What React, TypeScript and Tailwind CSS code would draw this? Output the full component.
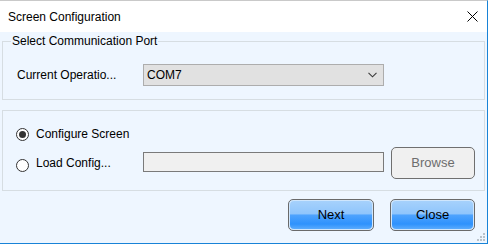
const font = "font-['Liberation_Sans',Arial,sans-serif]"

function Radio({ checked }: { checked?: boolean }) {
  return (
    <span className="w-[13px] h-[13px] rounded-full border border-[#333] bg-white flex items-center justify-center shrink-0">
      {checked && <span className="w-[7px] h-[7px] rounded-full bg-[#333]" />}
    </span>
  )
}

function BlueButton({ label, width }: { label: string; width: string }) {
  return (
    <button
      className={`${width} h-[32px] rounded-[5px] border border-[#6a6a6a] p-[1px] bg-[#cfe6fd]`}
    >
      <span className="flex items-center justify-center w-full h-full rounded-[4px] bg-[linear-gradient(#a6d1fc_0%,#8fc5fc_46%,#4ea3fe_50%,#2e92fd_82%,#5aabfd_100%)] text-[13px] text-black">
        {label}
      </span>
    </button>
  )
}

export default function App() {
  return (
    <div className={`w-[489px] h-[244px] bg-white ${font} text-[12px] text-black`}>
      <div className="relative w-[488px] h-[244px] flex flex-col border-r border-b border-[#1883d7] border-t border-t-[#c9c9c9]">
        {/* Title bar */}
        <div className="h-[31px] bg-white flex items-center justify-between pl-[8px] pr-[9px]">
          <span className="text-[12px] leading-[14px]">Screen Configuration</span>
          <svg width="11" height="11" viewBox="0 0 11 11">
            <path d="M0.5 0.5 L10.5 10.5 M10.5 0.5 L0.5 10.5" stroke="#000" strokeWidth="1" />
          </svg>
        </div>

        {/* Body */}
        <div className="flex-1 bg-[#eef6ff] px-[2px] flex flex-col">
          <fieldset className="mt-[2px] border border-[#d6dde2] pl-[14px] pr-[10px] pb-[13px]">
            <legend className="ml-[-6px] px-[1px] leading-[14px] text-[12px]">Select Communication Port</legend>
            <div className="mt-[16px] flex items-center">
              <span className="w-[126px] leading-[14px]">Current Operatio...</span>
              <div className="w-[241px] h-[22px] bg-[#e1e1e1] border border-[#adadad] flex items-center justify-between pl-[3px] pr-[6px]">
                <span className="leading-[14px]">COM7</span>
                <svg width="9" height="6" viewBox="0 0 9 6">
                  <path d="M0.5 0.8 L4.5 4.8 L8.5 0.8" fill="none" stroke="#3a3a3a" strokeWidth="1.1" />
                </svg>
              </div>
            </div>
          </fieldset>

          <div className="mt-[10px] border border-[#d6dde2] pl-[13px] pr-[9px] pt-[15px] pb-[11px] flex flex-col">
            <div className="flex items-center h-[16px]">
              <Radio checked />
              <span className="ml-[7px] leading-[14px]">Configure Screen</span>
            </div>
            <div className="mt-[5px] flex items-center h-[32px]">
              <div className="w-[127px] flex items-center">
                <span className="mt-[5px]">
                  <Radio />
                </span>
                <span className="ml-[7px] leading-[14px]">Load Config...</span>
              </div>
              <div className="w-[241px] h-[20px] bg-[#f0f0f0] border border-[#7a7a7a] mt-[-2px]" />
              <button className="ml-[7px] w-[84px] h-[32px] rounded-[5px] border border-[#6f6f6f] bg-[#f0f0f0] text-[13px] text-[#6d6d6d]">
                Browse
              </button>
            </div>
          </div>

          <div className="mt-[8px] flex justify-end gap-[16px] pr-[10px]">
            <BlueButton label="Next" width="w-[86px]" />
            <BlueButton label="Close" width="w-[85px]" />
          </div>
        </div>

        {/* resize grip */}
        <svg className="absolute right-[2px] bottom-[2px]" width="8" height="8" viewBox="0 0 8 8">
          <g fill="#b9c2ca">
            <rect x="6" y="0" width="2" height="2" />
            <rect x="3" y="3" width="2" height="2" />
            <rect x="6" y="3" width="2" height="2" />
            <rect x="0" y="6" width="2" height="2" />
            <rect x="3" y="6" width="2" height="2" />
            <rect x="6" y="6" width="2" height="2" />
          </g>
        </svg>
      </div>
    </div>
  )
}
